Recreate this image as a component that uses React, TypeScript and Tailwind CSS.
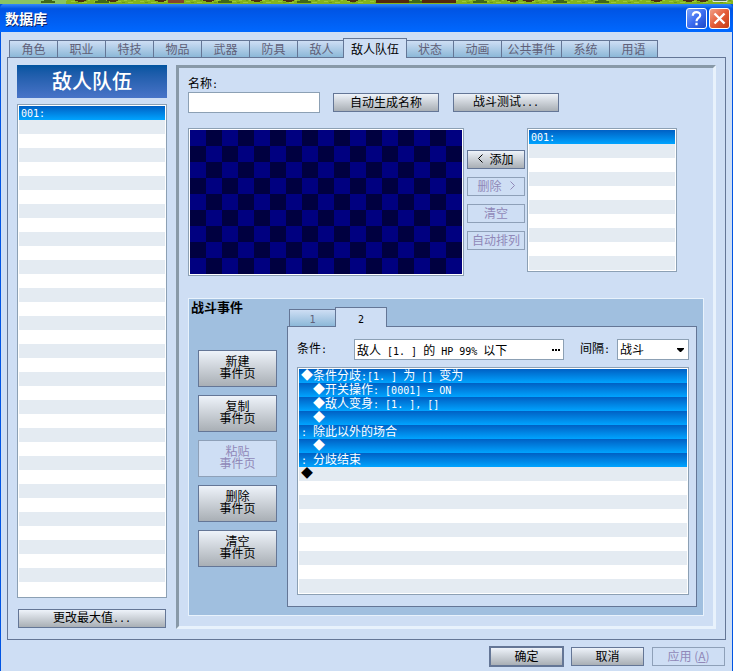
import type { ReactNode } from "react"

const leftTabs = ["角色", "职业", "特技", "物品", "武器", "防具", "敌人"]
const rightTabs = ["状态", "动画", "公共事件", "系统", "用语"]

const commands = [
  "◆条件分歧:[1. ] 为 [] 变为",
  "  ◆开关操作: [0001] = ON",
  "  ◆敌人变身: [1. ], []",
  "  ◆",
  ": 除此以外的场合",
  "  ◆",
  ": 分歧结束",
  "◆",
]

const pageButtons = [
  { name: "新建" },
  { name: "复制" },
  { name: "粘贴", disabled: true },
  { name: "删除" },
  { name: "清空" },
]

const bushes = [41, 95, 218, 297, 409, 473, 553, 595]
const trees = [75, 107, 155, 203, 251, 283, 347, 507, 523, 651, 683, 697]

// Latin characters take half the width of a Chinese one
function Txt({ children }: { children: string }) {
  const parts = children.split(/([\x20-\x7e]+)/)
  return (
    <span className="whitespace-pre">
      {parts.map((p, i) =>
        i % 2 ? (
          <span key={i} className="font-['DejaVu_Sans_Mono',monospace] text-[10px] leading-none">{p}</span>
        ) : (
          p
        )
      )}
    </span>
  )
}

function Button({ children, className = "", disabled = false }: { children: ReactNode; className?: string; disabled?: boolean }) {
  const look = disabled
    ? "border-[#8ea0b8] bg-[#cedef4] text-[#9088b8]"
    : "border-[#647696] bg-linear-to-b from-[#eef3fa] to-[#a9afb5] text-black"
  return (
    <button type="button" disabled={disabled} className={`flex shrink-0 items-center justify-center border pb-0.5 leading-3 ${look} ${className}`}>
      {children}
    </button>
  )
}

function Tab({ name, active = false, className = "" }: { name: string; active?: boolean; className?: string }) {
  const look = active
    ? "z-10 h-5 border-b-0 bg-[#cedef4]"
    : "h-[18px] bg-linear-to-b from-[#cedef4] to-[#8cb8d8] text-[#606078]"
  return (
    <button type="button" role="tab" aria-selected={active} className={`relative -mr-px shrink-0 border border-[#647696] leading-4 ${look} ${className}`}>
      <Txt>{name}</Txt>
    </button>
  )
}

function List({ rows, count, selected, className = "" }: { rows: string[]; count: number; selected: number; className?: string }) {
  return (
    <ul className={`border border-[#8ca0b4] bg-white p-px ${className}`}>
      {Array.from({ length: count }, (_, i) => (
        <li
          key={i}
          className={`h-3.5 px-0.5 leading-3 ${
            i < selected ? "bg-linear-to-b from-[#0060c4] to-[#00a4ff] text-white" : i % 2 ? "bg-[#e4ebf2]" : "bg-white"
          }`}
        >
          {rows[i] && <Txt>{rows[i]}</Txt>}
        </li>
      ))}
    </ul>
  )
}

function GameMap() {
  return (
    <svg className="block h-1 w-full" aria-hidden="true">
      <defs>
        <pattern id="grass" width="23" height="4" patternUnits="userSpaceOnUse">
          <rect width="23" height="4" fill="#84b41c" />
          <path d="M2 1.500h4M9 .5h3M13 2.500h5M19 .5h2" stroke="#9cc838" />
          <path d="M7 2.500h3M16 .5h2" stroke="#6c9c14" />
        </pattern>
      </defs>
      <rect width="100%" height="4" fill="url(#grass)" />
      <rect width="66" height="4" fill="#88c464" />
      {bushes.map((x) => (
        <path key={x} d={`M${x} 1h3v-1h8v1h3v2h-14z`} fill="#406818" />
      ))}
      {trees.map((x) => (
        <path key={x} d={`M${x} 0h11v1h-2v1h-6v-1h-3z`} fill="#4c3010" />
      ))}
      <path d="M168 0h16v3h-16z" fill="#84442c" />
      <path d="M376 0h33v3h-33zM422 0h34v3h-34z" fill="#54280c" />
      <path d="M713 0v1.500h14V0" fill="#547050" stroke="#dce8dc" />
    </svg>
  )
}

function TitleBar() {
  return (
    <header className="-mt-px flex h-[29px] items-center gap-0.5 rounded-t-md bg-linear-to-b from-[#3c94ff] via-[#0054e4] via-20% to-[#0068ff] pt-0.5 pr-[3px] pl-[5px]">
      <h1 className="flex-1 pb-0.5 text-sm font-bold text-white [text-shadow:1px_1px_0_#0a246a]">数据库</h1>
      <button type="button" aria-label="帮助" className="size-[21px] rounded-[3px] border border-white bg-linear-to-br from-[#7ea4f8] via-[#3c6cf0] to-[#1c48c8]">
        <svg viewBox="0 0 19 19" className="size-full" fill="none" stroke="#fff" strokeWidth="2.2">
          <path d="M5.800 6.800c0-5 7.400-4.600 7.400-.6 0 2.800-3.700 2.800-3.700 6M9.500 13.800v2.400" />
        </svg>
      </button>
      <button type="button" aria-label="关闭" className="size-[21px] rounded-[3px] border border-white bg-linear-to-br from-[#f0a088] via-[#e45c38] to-[#c43c10]">
        <svg viewBox="0 0 19 19" className="size-full" fill="none" stroke="#fff" strokeWidth="2.4">
          <path d="M4.500 4.500l10 10M14.500 4.500l-10 10" />
        </svg>
      </button>
    </header>
  )
}

function BattleEvents() {
  return (
    <section className="flex border border-[#e8f2fc] bg-[#a0bfdf] pt-2 pr-1.5 pb-2">
      <div className="-mt-1.5 flex w-[98px] shrink-0 flex-col pl-0.5">
        <h3 className="text-[13px] leading-3 font-bold">战斗事件</h3>
        <div className="mt-[37px] flex flex-col gap-2 pl-[7px]">
          {pageButtons.map((b) => (
            <Button key={b.name} disabled={b.disabled} className="h-[37px] w-[79px]">
              <span className="pb-0.5">
                {b.name}
                <br />
                事件页
              </span>
            </Button>
          ))}
        </div>
      </div>
      <div className="min-w-0 flex-1">
        <div role="tablist" className="relative flex h-5 items-end pl-0.5">
          <Tab name="1" className="w-[47px]" />
          <Tab name="2" active className="w-[52px]" />
        </div>
        <div className="-mt-px border border-[#647696] bg-[#cedef4] pt-3 pr-[7px] pb-[11px] pl-[9px]">
          <div className="flex">
            <span id="condition" className="w-[57px] leading-4.5"><Txt>条件:</Txt></span>
            <button type="button" aria-labelledby="condition" className="flex h-[21px] min-w-0 flex-1 items-center justify-between border border-[#8ca0b4] bg-white px-0.5 leading-4">
              <Txt>敌人 [1. ] 的 HP 99% 以下</Txt>
              <svg width="9" height="2" fill="#000">
                <path d="M0 0h2v2H0zM3 0h2v2H3zM6 0h2v2H6z" />
              </svg>
            </button>
            <label htmlFor="span" className="ml-4 w-[37px] leading-4.5"><Txt>间隔:</Txt></label>
            <div className="relative">
              <select id="span" className="block h-[21px] w-[72px] appearance-none border border-[#8ca0b4] bg-white px-0.5 pb-0.5">
                <option>战斗</option>
              </select>
              <svg width="7" height="4" className="pointer-events-none absolute top-[9px] right-[5px]">
                <path d="M0 0h7v1l-3 3h-1l-3-3z" />
              </svg>
            </div>
          </div>
          <List rows={commands} count={16} selected={7} className="mt-[7px]" />
        </div>
      </div>
    </section>
  )
}

export default function App() {
  return (
    <div className="bg-[#0054e3] font-['Noto_Sans_CJK_SC',sans-serif] text-xs text-black">
      <GameMap />
      <TitleBar />
      <main className="mx-px bg-[#cedef4] px-1.5 pt-1.5 pb-1">
        <nav role="tablist" className="relative flex h-5 items-end pl-0.5">
          {leftTabs.map((t) => (
            <Tab key={t} name={t} className="w-[49px]" />
          ))}
          <Tab name="敌人队伍" active className="-ml-0.5 w-16" />
          {rightTabs.map((t) => (
            <Tab key={t} name={t} className={t.length > 2 ? "w-[61px]" : t === "状态" ? "w-12" : "w-[49px]"} />
          ))}
        </nav>
        <div className="-mt-px flex gap-[9px] border border-[#647696] px-[9px] pt-[7px] pb-2.5">
          <aside className="flex w-[150px] shrink-0 flex-col">
            <h2 className="h-[33px] bg-linear-to-b from-[#0054a0] to-[#4874c8] text-center text-xl leading-8 font-medium text-white">敌人队伍</h2>
            <List rows={["001:"]} count={35} selected={1} className="mt-1.5" />
            <Button className="mx-px mt-[11px] h-[19px]"><Txt>更改最大值...</Txt></Button>
          </aside>
          <section className="min-w-0 flex-1 border-3 border-t-[#8899a8] border-r-[#e8f2fc] border-b-[#e8f2fc] border-l-[#8899a8] px-[9px] pt-1.5 pb-2.5">
            <label htmlFor="name" className="block h-4.5 leading-4.5"><Txt>名称:</Txt></label>
            <div className="flex items-center">
              <input id="name" className="h-[21px] w-[132px] border border-[#8ca0b4] bg-white px-1 outline-none" />
              <Button className="ml-[13px] h-[19px] w-[106px]">自动生成名称</Button>
              <Button className="ml-3.5 h-[19px] w-[106px]"><Txt>战斗测试...</Txt></Button>
            </div>
            <div className="mt-[15px] flex items-start">
              <div className="h-[148px] w-[276px] shrink-0 border border-[#8ca0b4] bg-white p-px">
                <div className="h-full bg-[repeating-conic-gradient(#000040_0_25%,#000080_0_50%)] bg-size-[32px_32px]" />
              </div>
              <div className="mt-[22px] ml-[3px] flex w-[58px] shrink-0 flex-col gap-2">
                <Button className="h-[19px]">
                  <svg width="5" height="9" fill="none" stroke="#000" className="mr-1.5"><path d="M4.500 .5l-4 4 4 4" /></svg>
                  添加
                </Button>
                <Button disabled className="h-[19px]">
                  删除
                  <svg width="5" height="9" fill="none" stroke="#9088b8" className="ml-2"><path d="M.5 .5l4 4-4 4" /></svg>
                </Button>
                <Button disabled className="h-[19px]">清空</Button>
                <Button disabled className="h-[19px]">自动排列</Button>
              </div>
              <List rows={["001:"]} count={10} selected={1} className="ml-0.5 w-[150px]" />
            </div>
            <div className="mt-[22px]">
              <BattleEvents />
            </div>
          </section>
        </div>
        <footer className="mt-1.5 flex items-center justify-end gap-2 pr-px">
          <Button className="-mr-px h-[21px] w-[75px] border-2">确定</Button>
          <Button className="h-[19px] w-[73px]">取消</Button>
          <Button disabled className="h-[19px] w-[73px]">
            <span>应用 (<u>A</u>)</span>
          </Button>
        </footer>
      </main>
    </div>
  )
}
